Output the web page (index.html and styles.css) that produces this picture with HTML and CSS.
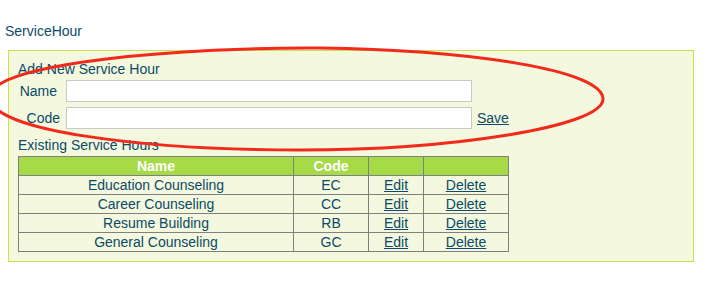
FILE: index.html
```html
<!DOCTYPE html>
<html lang="en">
<head>
  <meta charset="UTF-8">
  <title>ServiceHour</title>
  <link rel="stylesheet" href="styles.css">
</head>
<body>
  <h1 class="page-title">ServiceHour</h1>
  <div class="panel">
    <h2 class="section-title">Add New Service Hour</h2>
    <div class="form">
      <label class="label label-name">Name</label>
      <input type="text" class="field">
      <span></span>
      <label class="label label-code">Code</label>
      <input type="text" class="field">
      <a href="#" class="link save">Save</a>
    </div>
    <h2 class="section-title existing">Existing Service Hours</h2>
    <table class="hours">
      <thead>
        <tr>
          <th class="col-name">Name</th>
          <th class="col-code">Code</th>
          <th class="col-edit"></th>
          <th class="col-delete"></th>
        </tr>
      </thead>
      <tbody>
        <tr><td>Education Counseling</td><td>EC</td><td><a href="#" class="link">Edit</a></td><td><a href="#" class="link">Delete</a></td></tr>
        <tr><td>Career Counseling</td><td>CC</td><td><a href="#" class="link">Edit</a></td><td><a href="#" class="link">Delete</a></td></tr>
        <tr><td>Resume Building</td><td>RB</td><td><a href="#" class="link">Edit</a></td><td><a href="#" class="link">Delete</a></td></tr>
        <tr><td>General Counseling</td><td>GC</td><td><a href="#" class="link">Edit</a></td><td><a href="#" class="link">Delete</a></td></tr>
      </tbody>
    </table>
  </div>

  <!-- hand-drawn red annotation over the form -->
  <svg class="annotation" width="710" height="281" viewBox="0 0 710 281">
    <path d="M -10 97 C -10 62, 190 47, 320 48 C 470 50, 603 70, 603 99 C 603 127, 450 150, 300 150 C 150 150, -10 132, -10 97 Z"
          fill="none" stroke="#f22a1c" stroke-width="3"/>
  </svg>
</body>
</html>
```

FILE: styles.css
```css
body {
  margin: 0;
  font-family: 'Liberation Sans', Arial, sans-serif;
  font-size: 14px;
  color: #0b4a68;
  background-color: white;
}

.page-title {
  font-size: 14px;
  font-weight: normal;
  line-height: 16px;
  margin: 23px 0 11px 5px;
}

.panel {
  width: 666px;
  height: 200px;
  margin-left: 8px;
  padding: 10px 9px 0 9px;
  border: 1px solid #cbe04a;
  background-color: #f3f8de;
}

.section-title {
  font-size: 14px;
  font-weight: normal;
  line-height: 16px;
  margin: 0;
}

.form {
  display: grid;
  grid-template-columns: 42px 406px auto;
  column-gap: 6px;
  row-gap: 5px;
  align-items: center;
  margin-top: 3px;
  width: 500px;
}

.label {
  text-align: right;
}

.label-name {
  padding-right: 3px;
}

.field {
  box-sizing: border-box;
  width: 406px;
  height: 22px;
  margin: 0;
  border: 1px solid #c9c9c9;
  background-color: white;
}

.link {
  color: #0b4a68;
  text-decoration: underline;
}

.save {
  margin-left: -1px;
}

.existing {
  margin-top: 8px;
}

.hours {
  border-collapse: collapse;
  width: 491px;
  margin-top: 3px;
}

.hours th,
.hours td {
  border: 1px solid #808080;
  height: 18px;
  padding: 0;
  text-align: center;
  line-height: 17px;
}

.hours th {
  background-color: #a6da46;
  color: white;
  font-weight: bold;
}

.col-name {
  width: 274px;
}

.col-code {
  width: 74px;
}

.col-edit {
  width: 54px;
}

.annotation {
  position: absolute;
  top: 0;
  left: 0;
  pointer-events: none;
}
```
